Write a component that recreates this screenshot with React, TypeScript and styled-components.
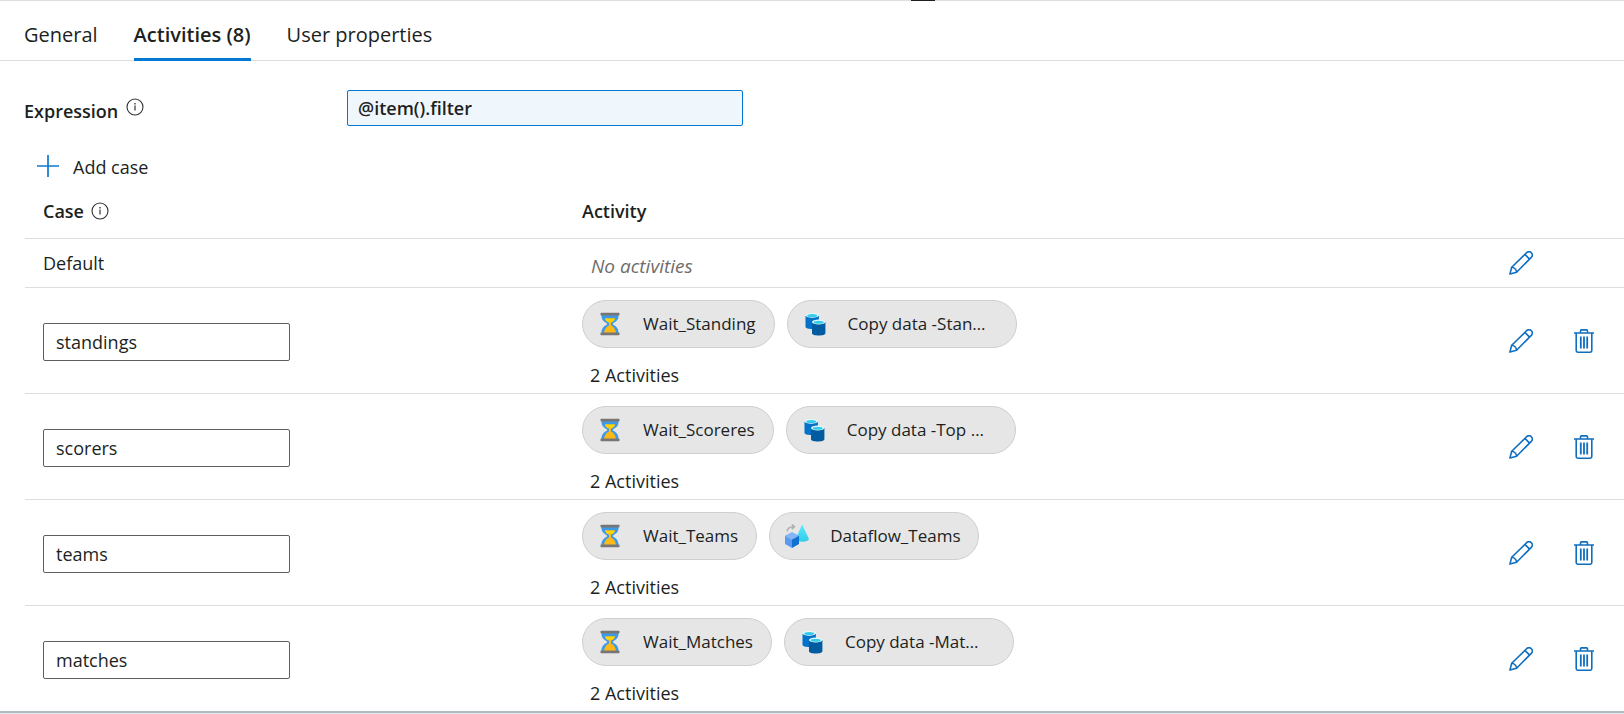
import React, { useState } from "react";
import styled, { createGlobalStyle, css } from "styled-components";

const GlobalStyle = createGlobalStyle`
  *, *::before, *::after { box-sizing: border-box; }
  body {
    margin: 0;
    background: #fff;
    color: #201f1e;
    font-family: "Segoe UI", "Open Sans", "Noto Sans", sans-serif;
    font-size: 18px;
    line-height: 24px;
  }
  button, input { font: inherit; color: inherit; }
  button { background: none; border: 0; padding: 0; cursor: pointer; }
`;

const Panel = styled.main`
  display: flex;
  flex-direction: column;
`;

const Splitter = styled.div`
  display: grid;
  grid-template-columns: 911fr 24px 689fr;
  height: 1px;
  background: #dedede;
`;

const SplitterHandle = styled.span`
  grid-column: 2;
  background: #201f1e;
`;

const TabList = styled.div`
  display: flex;
  gap: 36px;
  height: 60px;
  padding-left: 24px;
  border-bottom: 1px solid #dedede;
`;

const Tab = styled.button<{ $active: boolean }>`
  height: 60px;
  padding-top: 10px;
  border-bottom: 3px solid transparent;
  font-size: 20px;
  white-space: nowrap;
  ${(p) =>
    p.$active &&
    css`
      border-bottom-color: #0078d4;
      font-weight: 600;
    `}
`;

const ExpressionRow = styled.div`
  display: grid;
  grid-template-columns: 323px minmax(0, 396px);
  padding: 29px 24px 0;
`;

const FieldLabel = styled.label`
  display: flex;
  gap: 8px;
  padding-top: 9px;
  font-weight: 600;

  svg { margin-top: -1px; }
`;

const TextField = styled.input`
  width: 100%;
  height: 38px;
  padding: 0 12px;
  border: 1px solid #605e5c;
  border-radius: 2px;
  background: #fff;
  outline: none;
`;

const ExpressionField = styled(TextField)`
  height: 36px;
  padding: 0 10px;
  border-color: #0078d4;
  background: #eff6fc;
  font-weight: 600;
`;

const AddButton = styled.button`
  display: flex;
  align-items: center;
  align-self: flex-start;
  gap: 13px;
  margin: 27px 0 0 36px;
`;

const AddLabel = styled.span`
  padding-top: 2px;
`;

const CaseTable = styled.table`
  width: calc(100% - 25px);
  margin: 7px 0 0 25px;
  border-collapse: separate;
  border-spacing: 0;
  table-layout: fixed;
`;

const HeadCell = styled.th<{ $width?: number; $inset?: boolean }>`
  width: ${(p) => (p.$width ? `${p.$width}px` : "auto")};
  height: 53px;
  padding: 0 0 2px ${(p) => (p.$inset ? 18 : 0)}px;
  border-bottom: 1px solid #dedede;
  font-weight: 600;
  text-align: left;
`;

const HeadLabel = styled.span`
  display: flex;
  align-items: center;
  gap: 7px;
`;

const Row = styled.tr`
  &:last-child > td {
    height: 105px;
    border-bottom: 0;
  }
`;

const Cell = styled.td<{ $short?: boolean; $inset?: boolean }>`
  height: ${(p) => (p.$short ? 49 : 106)}px;
  padding: 0 0 0 ${(p) => (p.$inset ? 18 : 0)}px;
  border-bottom: 1px solid #dedede;
  vertical-align: middle;
`;

const CaseField = styled(TextField)`
  display: block;
  width: 247px;
  margin-top: 2px;
`;

const Pills = styled.div`
  display: flex;
  gap: 12px;
  padding-top: 5px;
`;

const Pill = styled.div`
  display: flex;
  align-items: center;
  gap: 21px;
  height: 48px;
  padding: 0 18px 0 15px;
  border: 1px solid #cfcfcf;
  border-radius: 24px;
  background: #e6e6e6;
  font-size: 17px;
  white-space: nowrap;
`;

const PillName = styled.span<{ $clipped?: boolean }>`
  ${(p) => p.$clipped && "width: 150px;"}
`;

const Count = styled.div`
  padding: 15px 0 0 8px;
`;

const Empty = styled.em`
  display: block;
  padding: 6px 0 0 9px;
  color: #6f6d6b;
  font-size: 19px;
`;

const IconButton = styled.button`
  display: flex;
  color: #106ebe;
`;

const Footer = styled.div`
  height: 3px;
  border-top: 2px solid #b0bbbf;
  background: #e2ebf0;
`;

const InfoIcon = () => (
  <svg width="18" height="18" viewBox="0 0 18 18" fill="none" stroke="#323130" aria-hidden="true">
    <circle cx="9" cy="9" r="8" strokeWidth="1.1" />
    <path d="M9 7.6v5" strokeWidth="1.2" />
    <path d="M9 5v1.4" strokeWidth="1.3" />
  </svg>
);

const PlusIcon = () => (
  <svg width="24" height="24" viewBox="0 0 24 24" stroke="#0f78cc" strokeWidth="1.7" aria-hidden="true">
    <path d="M12 1v22M1 12h22" />
  </svg>
);

const PencilIcon = () => (
  <svg width="24" height="24" viewBox="0 0 24 24" fill="none" stroke="currentColor" strokeWidth="1.6" strokeLinejoin="round" aria-hidden="true">
    <path d="M.9 23.1 2.7 16.2 17.6 1.7C19 .4 21 .4 22.3 1.7s1.3 3.3 0 4.7L7.6 21.2Z" />
    <path d="M15.9 3.4l4.7 4.7M2.7 16.2c2.2-.1 5 2.7 4.9 5" />
  </svg>
);

const TrashIcon = () => (
  <svg width="24" height="24" viewBox="0 0 24 24" fill="none" stroke="currentColor" strokeWidth="1.6" aria-hidden="true">
    <path d="M2 4h20M8.5 4V1.9c0-.6.4-1 1-1h5c.6 0 1 .4 1 1V4M4.2 4v17.6c0 .9.6 1.6 1.5 1.6h12.6c.9 0 1.5-.7 1.5-1.6V4" />
    <path d="M8.8 7.6v11.8M12 7.6v11.8M15.2 7.6v11.8" strokeWidth="1.8" />
  </svg>
);

const WaitIcon = () => (
  <svg width="24" height="24" viewBox="0 0 24 24" aria-hidden="true">
    <path d="M3.400 3h17.200c0 5-2.600 6.700-5.600 8.400v1.200c3 1.700 5.600 3.600 5.600 8.900H3.400c0-5.300 2.600-7.200 5.600-8.900v-1.200C6 9.700 3.400 8 3.400 3Z" fill="#3f9ae6" />
    <path d="M7 6.500h10c-.5 2-2 3.300-4 4.300v2.600c2.400 1.200 4.600 3.500 5 7.600H6c.4-4.100 2.600-6.400 5-7.600v-2.600c-2-1-3.500-2.300-4-4.300Z" fill="#ffb916" />
    <path d="M7 6.500h10c-.4 1.400-1.200 2.400-2.300 3.200H9.300C8.200 8.900 7.400 7.900 7 6.500Z" fill="#ffd400" />
    <rect x="2.500" y=".8" width="19" height="2.600" rx=".8" fill="#767676" />
    <rect x="2.500" y="20.600" width="19" height="2.600" rx=".8" fill="#767676" />
  </svg>
);

const CopyIcon = () => (
  <svg width="24" height="24" viewBox="0 0 24 24" aria-hidden="true">
    <path d="M2.500 3.300v11.500c0 1.300 3 2.300 6.700 2.300s6.700-1 6.700-2.300V3.300Z" fill="#0072c9" />
    <ellipse cx="9.200" cy="3.300" rx="6.700" ry="2.400" fill="#e8f7fb" />
    <ellipse cx="9.200" cy="3.500" rx="5" ry="1.500" fill="#32cdea" />
    <path d="M9 10v11.200c0 1.300 3 2.300 6.700 2.300s6.700-1 6.700-2.300V10Z" fill="#005ba1" />
    <ellipse cx="15.700" cy="10" rx="6.700" ry="2.400" fill="#e8f7fb" />
    <ellipse cx="15.700" cy="10.200" rx="5" ry="1.500" fill="#32cdea" />
  </svg>
);

const DataflowIcon = () => (
  <svg width="24" height="24" viewBox="0 0 24 24" aria-hidden="true">
    <defs>
      <linearGradient id="cone" x1="0" y1="0" x2="0" y2="1">
        <stop offset="0" stopColor="#5ceaff" />
        <stop offset="1" stopColor="#32cbe6" />
      </linearGradient>
    </defs>
    <path d="M17.200.5 24 15c-.5 1.800-3.300 2.700-6.600 2.700S11 16.800 10.500 15Z" fill="url(#cone)" />
    <path d="M2.200 7.500c0-3 1.800-4.700 6.300-4.800M6.800.4l2.600 2.300-2.600 2.400" fill="none" stroke="#b0b0b0" strokeWidth="1.600" />
    <path d="M7 8l7 3.700-7 3.800-7-3.800Z" fill="#83b5f7" />
    <path d="M0 11.700l7 3.800V24l-7-4Z" fill="#5a9bf0" />
    <path d="M14 11.700l-7 3.800V24l7-4Z" fill="#0f72d2" />
  </svg>
);

const icons = { wait: WaitIcon, copy: CopyIcon, dataflow: DataflowIcon };

interface Activity {
  kind: keyof typeof icons;
  name: string;
  clipped?: boolean;
}

const cases: { value: string; activities: Activity[] }[] = [
  {
    value: "standings",
    activities: [
      { kind: "wait", name: "Wait_Standing" },
      { kind: "copy", name: "Copy data -Stan…", clipped: true },
    ],
  },
  {
    value: "scorers",
    activities: [
      { kind: "wait", name: "Wait_Scoreres" },
      { kind: "copy", name: "Copy data -Top …", clipped: true },
    ],
  },
  {
    value: "teams",
    activities: [
      { kind: "wait", name: "Wait_Teams" },
      { kind: "dataflow", name: "Dataflow_Teams" },
    ],
  },
  {
    value: "matches",
    activities: [
      { kind: "wait", name: "Wait_Matches" },
      { kind: "copy", name: "Copy data -Mat…", clipped: true },
    ],
  },
];

const tabs = ["General", "Activities (8)", "User properties"];

export default function App() {
  const [active, setActive] = useState(1);

  return (
    <>
      <GlobalStyle />
      <Panel>
        <Splitter>
          <SplitterHandle />
        </Splitter>
        <TabList role="tablist">
          {tabs.map((tab, i) => (
            <Tab key={tab} role="tab" aria-selected={i === active} $active={i === active} onClick={() => setActive(i)}>
              {tab}
            </Tab>
          ))}
        </TabList>
        <ExpressionRow>
          <FieldLabel htmlFor="expression">
            Expression
            <InfoIcon />
          </FieldLabel>
          <ExpressionField id="expression" defaultValue="@item().filter" />
        </ExpressionRow>
        <AddButton>
          <PlusIcon />
          <AddLabel>Add case</AddLabel>
        </AddButton>
        <CaseTable>
          <thead>
            <tr>
              <HeadCell $width={557} $inset>
                <HeadLabel>
                  Case
                  <InfoIcon />
                </HeadLabel>
              </HeadCell>
              <HeadCell>Activity</HeadCell>
              <HeadCell $width={63} aria-label="Edit" />
              <HeadCell $width={52} aria-label="Delete" />
            </tr>
          </thead>
          <tbody>
            <Row>
              <Cell $short $inset>Default</Cell>
              <Cell $short>
                <Empty>No activities</Empty>
              </Cell>
              <Cell $short>
                <IconButton aria-label="Edit default case">
                  <PencilIcon />
                </IconButton>
              </Cell>
              <Cell $short />
            </Row>
            {cases.map((item) => (
              <Row key={item.value}>
                <Cell $inset>
                  <CaseField aria-label="Case value" defaultValue={item.value} />
                </Cell>
                <Cell>
                  <Pills>
                    {item.activities.map(({ kind, name, clipped }) => {
                      const Icon = icons[kind];
                      return (
                        <Pill key={name}>
                          <Icon />
                          <PillName $clipped={clipped}>{name}</PillName>
                        </Pill>
                      );
                    })}
                  </Pills>
                  <Count>{item.activities.length} Activities</Count>
                </Cell>
                <Cell>
                  <IconButton aria-label={`Edit ${item.value}`}>
                    <PencilIcon />
                  </IconButton>
                </Cell>
                <Cell>
                  <IconButton aria-label={`Delete ${item.value}`}>
                    <TrashIcon />
                  </IconButton>
                </Cell>
              </Row>
            ))}
          </tbody>
        </CaseTable>
        <Footer />
      </Panel>
    </>
  );
}
